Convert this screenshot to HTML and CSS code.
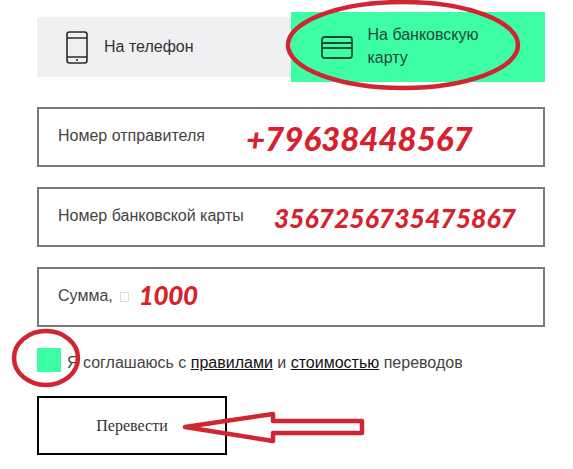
FILE: index.html
```html
<!DOCTYPE html>
<html lang="ru">

<head>
    <meta charset="UTF-8">
    <meta name="viewport" content="width=device-width, initial-scale=1.0">
    <title>Перевод на карту</title>
    <link rel="stylesheet" href="styles.css">
</head>

<body>
    <form class="transfer">
        <div class="tabs">
            <div class="tab">
                <svg class="tab-icon" width="22" height="33" viewBox="0 0 22 33" fill="none" stroke="#2b2b2b" stroke-width="1.6">
                    <rect x="1" y="1" width="20" height="31" rx="2.5"></rect>
                    <path d="M1 7h20M1 26h20"></path>
                    <circle cx="11" cy="29" r="1.1" fill="#2b2b2b" stroke="none"></circle>
                </svg>
                <span class="tab-text">На телефон</span>
            </div>
            <div class="tab tab-active">
                <svg class="tab-icon" width="32" height="23" viewBox="0 0 32 23" fill="none" stroke="#1f4a38" stroke-width="1.8">
                    <rect x="1" y="1" width="30" height="21" rx="2.5"></rect>
                    <path d="M1 7h30M1 12h30"></path>
                </svg>
                <span class="tab-text">На банковскую<br>карту</span>
            </div>
        </div>

        <div class="field">
            <span class="field-label">Номер отправителя</span>
            <span class="field-value value-phone">+79638448567</span>
        </div>
        <div class="field">
            <span class="field-label">Номер банковской карты</span>
            <span class="field-value value-card">3567256735475867</span>
        </div>
        <div class="field">
            <span class="field-label">Сумма,</span>
            <span class="missing-glyph"></span>
            <span class="field-value value-sum">1000</span>
        </div>

        <div class="agree">
            <span class="checkbox"></span>
            <span class="agree-text">Я соглашаюсь с <a href="#">правилами</a> и <a href="#">стоимостью</a> переводов</span>
        </div>

        <button type="button" class="submit">Перевести</button>
    </form>

    <!-- red marks drawn over the screenshot -->
    <svg class="marks" width="573" height="469" viewBox="0 0 573 469" fill="none" stroke="#d02631" stroke-width="4.5" stroke-linejoin="round">
        <ellipse cx="403" cy="45" rx="115" ry="43"></ellipse>
        <ellipse cx="46" cy="358" rx="32" ry="27"></ellipse>
        <path d="M185 427L273 414V421H362V433H273V441Z"></path>
    </svg>
</body>

</html>
```

FILE: styles.css
```css
body {
    font-family: 'Liberation Sans', Arial, sans-serif;
    background-color: #fff;
    color: #444;
    margin: 0;
    padding: 0;
}

.transfer {
    width: 508px;
    margin-left: 37px;
    padding-top: 12px;
    display: flex;
    flex-direction: column;
}

.tabs {
    display: flex;
    align-items: center;
    height: 70px;
    margin-bottom: 25px;
}

.tab {
    flex: 1;
    height: 60px;
    display: flex;
    align-items: center;
    gap: 16px;
    padding-left: 29px;
    box-sizing: border-box;
    background-color: #f0f0f2;
    font-size: 16px;
    line-height: 23px;
    color: #333;
}

.tab-active {
    height: 70px;
    gap: 15px;
    padding-left: 30px;
    background-color: #3dfea5;
    color: #1f4a38;
}

.tab-icon {
    flex-shrink: 0;
}

.tab-text {
    margin-bottom: 2px;
}

.field {
    height: 60px;
    margin-bottom: 20px;
    display: flex;
    align-items: center;
    padding-left: 19px;
    box-sizing: border-box;
    border: 2px solid #7a7a7a;
    font-size: 16px;
}

.field-label {
    white-space: nowrap;
    margin-bottom: 3px;
}

.field-value {
    font-family: Lato, 'Open Sans', sans-serif;
    font-weight: 900;
    font-style: italic;
    color: #d6222e;
    white-space: nowrap;
}

.value-phone {
    font-size: 33px;
    margin-left: 41px;
    margin-bottom: -1px;
}

.value-card {
    font-size: 26.5px;
    margin-left: 30px;
    margin-top: 1px;
}

.value-sum {
    font-size: 26px;
    letter-spacing: -0.3px;
    margin-left: 10px;
    margin-bottom: 5px;
}

.missing-glyph {
    width: 7px;
    height: 8px;
    margin-left: 7px;
    border: 1px solid #ddd;
}

.agree {
    display: flex;
    align-items: center;
    gap: 6px;
    font-size: 16px;
}

.agree-text {
    margin-top: 7px;
}

.agree a {
    color: #111;
}

.checkbox {
    width: 24px;
    height: 24px;
    background-color: #3dfea5;
}

.submit {
    width: 190px;
    height: 59px;
    margin-top: 24px;
    padding: 0;
    background-color: #fff;
    border: 2px solid #000;
    font-family: 'Liberation Serif', 'Times New Roman', serif;
    font-size: 16px;
    color: #333;
}

.marks {
    position: absolute;
    left: 0;
    top: 0;
    pointer-events: none;
}
```
